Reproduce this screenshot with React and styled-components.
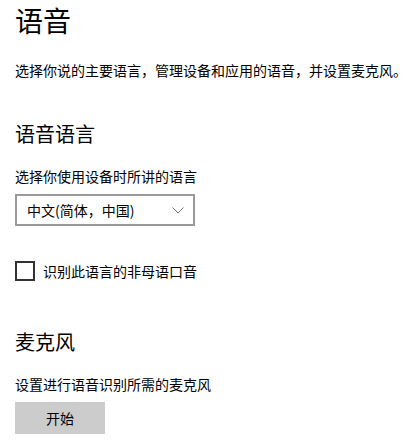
import React, { useState } from "react";
import styled, { createGlobalStyle } from "styled-components";

const GlobalStyle = createGlobalStyle`
	html, body {
		margin: 0;
		padding: 0;
		background: #fff;
	}
	body {
		font-family: "Noto Sans CJK SC", "Noto Sans", sans-serif;
		color: #000;
	}
`;

const Page = styled.div`
	display: flex;
	flex-direction: column;
	align-items: flex-start;
	padding: 2px 15px 0 15px;
`;

const Title = styled.h1`
	margin: 0;
	font-size: 28px;
	line-height: 36px;
	font-weight: 400;
`;

const Description = styled.p`
	margin: 22px 0 0 0;
	font-size: 14px;
	line-height: 20px;
	white-space: nowrap;
`;

const SectionTitle = styled.h2`
	margin: ${({ $gap }) => $gap}px 0 0 0;
	font-size: 20px;
	line-height: 28px;
	font-weight: 400;
`;

const Label = styled.div`
	margin-top: 18px;
	font-size: 14px;
	line-height: 20px;
`;

const Select = styled.div`
	margin-top: 8px;
	box-sizing: border-box;
	width: 180px;
	height: 32px;
	border: 2px solid #999;
	display: flex;
	align-items: center;
	justify-content: space-between;
	padding: 0 9px 0 10px;
	font-size: 14px;
	cursor: pointer;
`;

const CheckRow = styled.label`
	margin-top: 35px;
	display: flex;
	align-items: center;
	gap: 8px;
	font-size: 14px;
	line-height: 20px;
	cursor: pointer;
`;

const Box = styled.span`
	box-sizing: border-box;
	width: 20px;
	height: 20px;
	border: 2px solid #333;
	background: ${({ $checked }) => ($checked ? "#0078d7" : "#fff")};
`;

const Button = styled.button`
	margin-top: 8px;
	width: 90px;
	height: 32px;
	border: none;
	background: #ccc;
	font-family: inherit;
	font-size: 14px;
	color: #000;
	padding: 0;
	cursor: pointer;
`;

const Chevron = () => (
	<svg width="12" height="7" viewBox="0 0 12 7">
		<polyline points="0.5,0.5 6,6 11.5,0.5" fill="none" stroke="#777" strokeWidth="1" />
	</svg>
);

const App = () => {
	const [accent, setAccent] = useState(false);

	return (
		<Page>
			<GlobalStyle />
			<Title>语音</Title>
			<Description>选择你说的主要语言，管理设备和应用的语音，并设置麦克风。</Description>

			<SectionTitle $gap={40}>语音语言</SectionTitle>
			<Label>选择你使用设备时所讲的语言</Label>
			<Select>
				<span>中文(简体，中国)</span>
				<Chevron />
			</Select>
			<CheckRow onClick={() => setAccent(!accent)}>
				<Box $checked={accent} />
				识别此语言的非母语口音
			</CheckRow>

			<SectionTitle $gap={47}>麦克风</SectionTitle>
			<Label>设置进行语音识别所需的麦克风</Label>
			<Button>开始</Button>
		</Page>
	);
};

export default App;
